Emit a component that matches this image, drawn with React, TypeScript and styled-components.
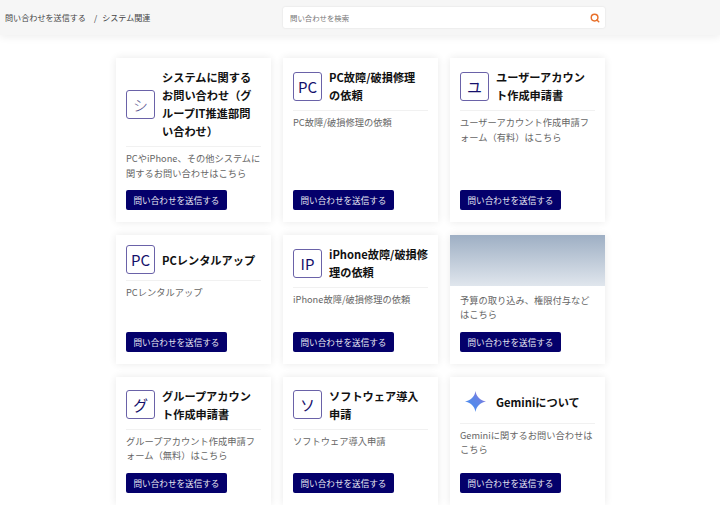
import React from "react";
import styled, { createGlobalStyle } from "styled-components";
import { FiSearch } from "react-icons/fi";

const GlobalStyle = createGlobalStyle`
  html, body {
    margin: 0;
    padding: 0;
    background: #fff;
    font-family: "Noto Sans CJK JP", "Noto Sans", sans-serif;
  }
  * {
    box-sizing: border-box;
  }
`;

const TopBar = styled.header`
  height: 35px;
  background-color: #f6f6f6;
  box-shadow: 0 2px 8px rgba(0, 0, 0, 0.07);
  display: grid;
  grid-template-columns: 283px 322px;
  align-items: center;
`;

const Breadcrumb = styled.nav`
  padding-left: 5px;
  font-size: 8.1px;
  color: #444;
  display: flex;
  gap: 5px;
`;

const Slash = styled.span`
  margin-left: 3px;
`;

const SearchBox = styled.div`
  height: 21px;
  background-color: #fff;
  border-radius: 2px;
  box-shadow: 0 0 2px rgba(0, 0, 0, 0.12);
  display: flex;
  align-items: center;
  justify-content: space-between;
  padding: 0 5px 0 7px;
  font-size: 7.4px;
  color: #777;
`;

const Grid = styled.main`
  width: 489px;
  margin: 23px 0 0 116px;
  display: grid;
  grid-template-columns: repeat(3, 155px);
  gap: 13px 12px;
`;

const Card = styled.article<{ $flush?: boolean }>`
  background-color: #fff;
  box-shadow: 0 0 8px rgba(0, 0, 0, 0.09);
  display: flex;
  flex-direction: column;
  padding: ${(p) => (p.$flush ? "0 0 12px" : "10px 10px 12px")};
`;

const CardHeader = styled.div`
  display: flex;
  align-items: center;
  gap: 7px;
  padding-bottom: 6px;
  border-bottom: 1px solid #f1f1f1;
`;

const IconBox = styled.div<{ $dim?: boolean }>`
  flex: 0 0 29px;
  height: 29px;
  border: 1px solid #6a62a8;
  border-radius: 3px;
  display: flex;
  align-items: center;
  justify-content: center;
  font-size: 15px;
  font-weight: ${(p) => (p.$dim ? 300 : 400)};
  color: ${(p) => (p.$dim ? "#5a5690" : "#15106b")};
`;

const LogoSlot = styled.div`
  flex: 0 0 29px;
  height: 30px;
  padding-left: 1px;
  display: flex;
  align-items: center;
  justify-content: center;
`;

const Title = styled.h2`
  margin: 0;
  font-size: 11.2px;
  font-weight: 700;
  line-height: 18px;
  color: #111;
  white-space: pre-line;
`;

const Description = styled.p`
  margin: 4px -1px 10px 0;
  font-size: 9.25px;
  line-height: 14.6px;
  color: #666;
`;

const SendButton = styled.button`
  margin-top: auto;
  width: 101px;
  height: 20px;
  padding: 0;
  border: none;
  border-radius: 2px;
  background-color: #04006b;
  color: #e6e6f2;
  font-family: inherit;
  font-size: 8.6px;
`;

const Banner = styled.div`
  height: 51px;
  background: linear-gradient(180deg, #9eafc4 0%, #e0e6ed 100%);
`;

const FlushBody = styled.div`
  flex: 1;
  display: flex;
  flex-direction: column;
  padding: 2.5px 10px 0;
`;

const GeminiLogo = () => (
  <svg width="21" height="23" viewBox="0 0 24 24">
    <defs>
      <linearGradient id="gem" x1="0" y1="1" x2="1" y2="0">
        <stop offset="0" stopColor="#3f8ff0" />
        <stop offset="0.55" stopColor="#5f86e8" />
        <stop offset="1" stopColor="#a06fd0" />
      </linearGradient>
    </defs>
    <path
      d="M12 0C12.9 6.4 17.6 11.1 24 12C17.6 12.9 12.9 17.6 12 24C11.1 17.6 6.4 12.9 0 12C6.4 11.1 11.1 6.4 12 0Z"
      fill="url(#gem)"
    />
  </svg>
);

type Item = {
  title: string;
  description: string;
  mark?: string;
  dim?: boolean;
  logo?: boolean;
  banner?: boolean;
};

const items: Item[] = [
  {
    title: "システムに関するお問い合わせ（グループIT推進部問い合わせ）",
    description: "PCやiPhone、その他システムに関するお問い合わせはこちら",
    mark: "シ",
    dim: true,
  },
  { title: "PC故障/破損修理\nの依頼", description: "PC故障/破損修理の依頼", mark: "PC" },
  {
    title: "ユーザーアカウント作成申請書",
    description: "ユーザーアカウント作成申請フォーム（有料）はこちら",
    mark: "ユ",
  },
  { title: "PCレンタルアップ", description: "PCレンタルアップ", mark: "PC" },
  { title: "iPhone故障/破損修\n理の依頼", description: "iPhone故障/破損修理の依頼", mark: "IP" },
  { title: "", description: "予算の取り込み、権限付与などはこちら", banner: true },
  {
    title: "グループアカウント作成申請書",
    description: "グループアカウント作成申請フォーム（無料）はこちら",
    mark: "グ",
  },
  { title: "ソフトウェア導入申請", description: "ソフトウェア導入申請", mark: "ソ" },
  { title: "Geminiについて", description: "Geminiに関するお問い合わせはこちら", logo: true },
];

const App: React.FC = () => (
  <>
    <GlobalStyle />
    <TopBar>
      <Breadcrumb>
        <span>問い合わせを送信する</span>
        <Slash>/</Slash>
        <span>システム関連</span>
      </Breadcrumb>
      <SearchBox>
        <span>問い合わせを検索</span>
        <FiSearch color="#e8702a" size={10} strokeWidth={3.5} />
      </SearchBox>
    </TopBar>
    <Grid>
      {items.map((item) =>
        item.banner ? (
          <Card $flush key={item.description}>
            <Banner />
            <FlushBody>
              <Description>{item.description}</Description>
              <SendButton>問い合わせを送信する</SendButton>
            </FlushBody>
          </Card>
        ) : (
          <Card key={item.title}>
            <CardHeader>
              {item.logo ? (
                <LogoSlot>
                  <GeminiLogo />
                </LogoSlot>
              ) : (
                <IconBox $dim={item.dim}>{item.mark}</IconBox>
              )}
              <Title>{item.title}</Title>
            </CardHeader>
            <Description>{item.description}</Description>
            <SendButton>問い合わせを送信する</SendButton>
          </Card>
        )
      )}
    </Grid>
  </>
);

export default App;
